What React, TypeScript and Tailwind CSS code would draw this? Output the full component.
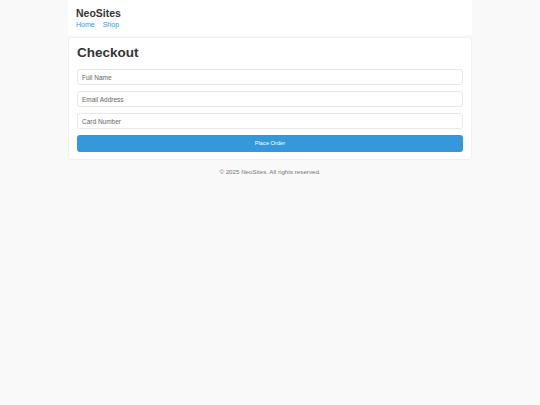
import React from 'react'

export default function App() {
  return (
    <div className="min-h-[405px] bg-[#f9f9f9] font-['Liberation_Sans',Arial,sans-serif] text-[#333]">
      <div className="mx-auto w-[404px]">
        <header className="bg-white px-2 pt-[7px] pb-[6px]">
          <h1 className="text-[10.5px] font-bold leading-[13px] text-[#333]">NeoSites</h1>
          <nav className="flex gap-[8px] text-[7px] leading-[9px] text-[#3498db]">
            <a href="#">Home</a>
            <a href="#">Shop</a>
          </nav>
        </header>

        <main className="mt-[2px] rounded-[3px] border border-[#f0f0f0] bg-white px-2 pt-[6px] pb-[7px]">
          <h2 className="mb-[7px] text-[13.5px] font-bold leading-[18px] text-[#333]">Checkout</h2>
          <form className="flex flex-col gap-[6px]" onSubmit={(e) => e.preventDefault()}>
            <input
              placeholder="Full Name"
              className="h-[16px] w-full rounded-[3px] border border-[#e8e8e8] px-[4px] text-[6.5px] placeholder:text-[#666] outline-none"
            />
            <input
              placeholder="Email Address"
              className="h-[16px] w-full rounded-[3px] border border-[#e8e8e8] px-[4px] text-[6.5px] placeholder:text-[#666] outline-none"
            />
            <input
              placeholder="Card Number"
              className="h-[16px] w-full rounded-[3px] border border-[#e8e8e8] px-[4px] text-[6.5px] placeholder:text-[#666] outline-none"
            />
            <button
              type="submit"
              className="h-[17px] w-full rounded-[3px] bg-[#3498db] text-[5.7px] text-white"
            >
              Place Order
            </button>
          </form>
        </main>

        <footer className="pt-[7px] text-center text-[6.2px] leading-[10px] text-[#777]">
          © 2025 NeoSites. All rights reserved.
        </footer>
      </div>
    </div>
  )
}
